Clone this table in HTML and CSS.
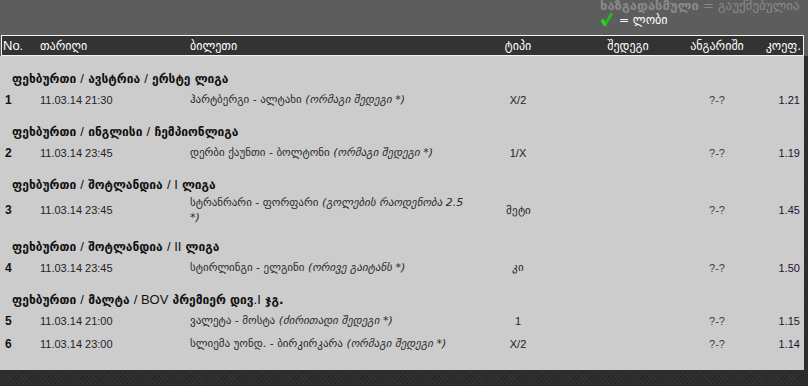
FILE: index.html
```html
<!DOCTYPE html>
<html lang="ka">
<head>
<meta charset="utf-8">
<title>ბილეთები</title>
<link rel="stylesheet" href="styles.css">
</head>
<body>
<div class="top">
  <div class="legend">
    <div class="l1"><span class="cancelled">ხაზგადასმული</span> = გაუქმებულია</div>
    <div class="l2">
      <svg class="check" width="13" height="15" viewBox="0 0 13 15"><path d="M0.5 8.5 L3.5 6.8 L5.2 10 L10.5 0.8 L12.7 2.2 L5.6 14.3 L4.2 14.3 Z" fill="#2fd22f"/><path d="M5.2 10 L10.5 0.8 L12.7 2.2 L5.6 14.3 Z" fill="#22b822"/></svg>
      <span>= ლობი</span>
    </div>
  </div>
</div>
<div class="headwrap">
  <div class="hbox">
    <div class="hgrid">
      <span class="h-no">No.</span>
      <span>თარიღი</span>
      <span>ბილეთი</span>
      <span class="center">ტიპი</span>
      <span class="center">შედეგი</span>
      <span class="center">ანგარიში</span>
      <span class="right">კოეფ.</span>
    </div>
  </div>
</div>
<div class="panel">
  <div class="group">ფეხბურთი <span class="lat">/</span> ავსტრია <span class="lat">/</span> ერსტე ლიგა</div>
  <div class="row">
    <span class="num">1</span>
    <span class="date">11.03.14 21:30</span>
    <span class="ticket">ჰარტბერგი - ალტახი <i>(ორმაგი შედეგი *)</i></span>
    <span class="type">X/2</span>
    <span class="result"></span>
    <span class="score">?-?</span>
    <span class="coef">1.21</span>
  </div>

  <div class="group gap">ფეხბურთი <span class="lat">/</span> ინგლისი <span class="lat">/</span> ჩემპიონლიგა</div>
  <div class="row">
    <span class="num">2</span>
    <span class="date">11.03.14 23:45</span>
    <span class="ticket">დერბი ქაუნთი - ბოლტონი <i>(ორმაგი შედეგი *)</i></span>
    <span class="type">1/X</span>
    <span class="result"></span>
    <span class="score">?-?</span>
    <span class="coef">1.19</span>
  </div>

  <div class="group gap">ფეხბურთი <span class="lat">/</span> შოტლანდია <span class="lat">/ I</span> ლიგა</div>
  <div class="row">
    <span class="num">3</span>
    <span class="date">11.03.14 23:45</span>
    <span class="ticket">სტრანრარი - ფორფარი <i>(გოლების რაოდენობა 2.5 *)</i></span>
    <span class="type">მეტი</span>
    <span class="result"></span>
    <span class="score">?-?</span>
    <span class="coef">1.45</span>
  </div>

  <div class="group gap">ფეხბურთი <span class="lat">/</span> შოტლანდია <span class="lat">/ II</span> ლიგა</div>
  <div class="row">
    <span class="num">4</span>
    <span class="date">11.03.14 23:45</span>
    <span class="ticket">სტირლინგი - ელგინი <i>(ორივე გაიტანს *)</i></span>
    <span class="type">კი</span>
    <span class="result"></span>
    <span class="score">?-?</span>
    <span class="coef">1.50</span>
  </div>

  <div class="group gap">ფეხბურთი <span class="lat">/</span> მალტა <span class="lat">/ BOV</span> პრემიერ დივ<span class="lat">.I</span> ჯგ.</div>
  <div class="row">
    <span class="num">5</span>
    <span class="date">11.03.14 21:00</span>
    <span class="ticket">ვალეტა - მოსტა <i>(ძირითადი შედეგი *)</i></span>
    <span class="type">1</span>
    <span class="result"></span>
    <span class="score">?-?</span>
    <span class="coef">1.15</span>
  </div>
  <div class="row">
    <span class="num">6</span>
    <span class="date">11.03.14 23:00</span>
    <span class="ticket">სლიემა უონდ. - ბირკირკარა <i>(ორმაგი შედეგი *)</i></span>
    <span class="type">X/2</span>
    <span class="result"></span>
    <span class="score">?-?</span>
    <span class="coef">1.14</span>
  </div>
</div>
</body>
</html>
```
FILE: styles.css
```css
html, body {
  margin: 0;
  padding: 0;
}
body {
  width: 808px;
  height: 386px;
  overflow: hidden;
  font-family: "DejaVu Sans", "Liberation Sans", sans-serif;
  background-color: #2c2c2c;
  background-image:
    repeating-linear-gradient(45deg, rgba(255,255,255,0.035) 0 1px, transparent 1px 3px),
    repeating-linear-gradient(-45deg, rgba(0,0,0,0.12) 0 1px, transparent 1px 3px);
}

.top {
  height: 35px;
  background: #5d5d5d;
  overflow: hidden;
}
.legend {
  margin-left: 600px;
  font-size: 12px;
}
.l1 {
  margin-top: -1px;
  line-height: 13px;
  font-size: 13px;
  color: #8a8a8a;
  white-space: nowrap;
}
.cancelled {
  font-weight: bold;
  color: #8a8a8a;
}
.l2 {
  display: flex;
  align-items: center;
  gap: 6px;
  height: 15px;
  margin-top: 0;
  color: #ffffff;
}
.check {
  display: block;
}

.headwrap {
  background: #5d5d5d;
  height: 21px;
}
.hbox {
  margin-left: 1px;
  width: 801px;
  height: 19px;
  border: 1px solid #f4f4f4;
  background: #333333;
}
.hgrid {
  display: grid;
  grid-template-columns: 38px 150px 280px 96px 124px 54px 59px;
  height: 19px;
  align-items: center;
  color: #ffffff;
  font-size: 12px;
}
.h-no {
  padding-left: 1px;
  font-family: "Liberation Sans", Arial, sans-serif;
  font-size: 13px;
}
.center { text-align: center; }
.right { text-align: right; padding-right: 2px; }

.panel {
  width: 804px;
  height: 314px;
  box-sizing: border-box;
  padding-top: 13px;
  background: #cccccc;
  color: #222222;
}
.group {
  height: 19px;
  line-height: 19px;
  padding-left: 12px;
  font-weight: bold;
  font-size: 12px;
  color: #111111;
  white-space: nowrap;
}
.group .lat {
  font-family: "Liberation Sans", Arial, sans-serif;
  font-weight: normal;
  font-size: 13px;
}
.group.gap {
  margin-top: 11px;
}
.row {
  display: grid;
  grid-template-columns: 40px 150px 280px 96px 124px 54px 60px;
  min-height: 23px;
  align-items: center;
  font-family: "Liberation Sans", Arial, sans-serif;
  font-size: 11px;
}
.num {
  padding-left: 5px;
  font-weight: bold;
  font-size: 12px;
  color: #111111;
}
.date {
  color: #1e1e2a;
}
.ticket {
  font-family: "DejaVu Sans", sans-serif;
  font-size: 11px;
  line-height: 15px;
  padding: 1px 0;
  color: #2a2a2a;
}
.ticket i {
  font-style: italic;
}
.type {
  text-align: center;
  color: #222222;
}
.score {
  text-align: center;
  color: #3a3f4a;
}
.coef {
  text-align: right;
  padding-right: 4px;
  color: #2a0f30;
}
```
